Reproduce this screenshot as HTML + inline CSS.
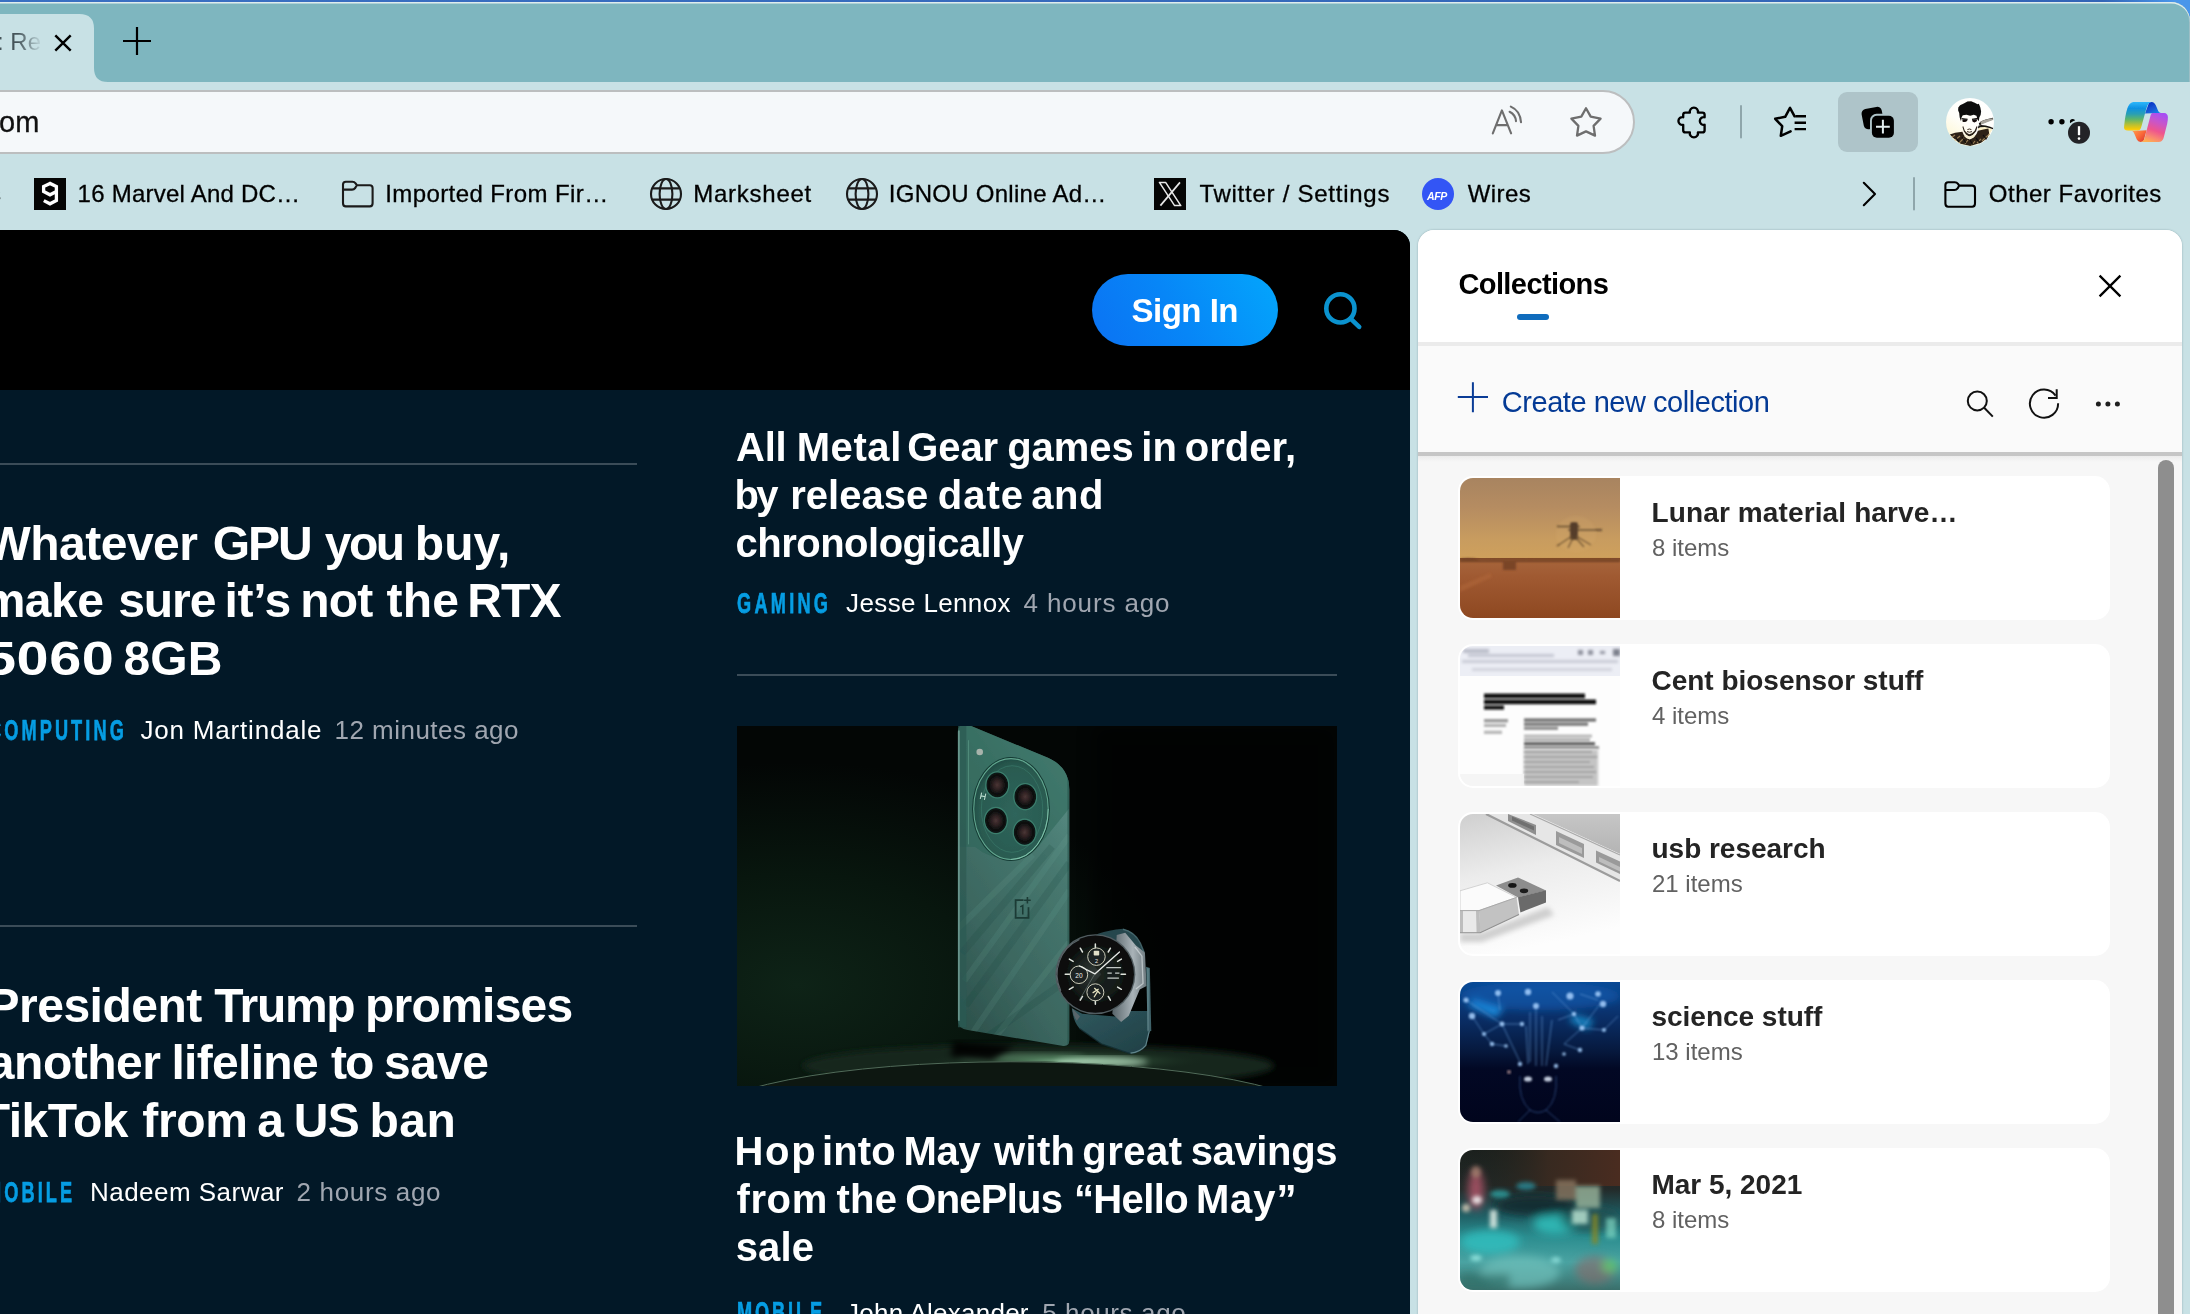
<!DOCTYPE html>
<html lang="en"><head><meta charset="utf-8"><title>Collections</title>
<style>
html,body{margin:0;padding:0}
body{background:#c8e1e5;width:2190px;height:1314px;overflow:hidden}
#root{position:relative;width:2190px;height:1314px;overflow:hidden;font-family:"Liberation Sans",sans-serif;background:#c8e1e5}
#root div,#root svg{position:absolute}
.t{position:absolute;white-space:pre}
#desk{left:0;top:0;width:2190px;height:60px;background:linear-gradient(90deg,#3a70c2 0%,#3365b6 96%,#4a96ea 99.3%)}
#win{left:-40px;top:2px;width:2230px;height:1400px;border-radius:0 19px 0 0;background:#7eb6bf;box-shadow:inset 0 1.5px 0 #dfeced, inset -1px 0 0 #9dbfc6}
#tool{left:-40px;top:82px;width:2230px;height:1300px;background:#c8e1e5}
#addr{left:-60px;top:90px;width:1691px;height:60px;border:2px solid #bcbebf;border-radius:33px;background:#f5f8fa}
#colbtn{left:1838px;top:92px;width:80px;height:60px;border-radius:9px;background:#aec4c9}
#afp{left:1422px;top:178px;width:32px;height:32px;border-radius:50%;background:#3355f5}
#page{left:-40px;top:230px;width:1450px;height:1100px;border-radius:0 16px 0 0;background:#021827;overflow:hidden}
#sitehdr{left:0;top:0;width:1450px;height:160px;background:#000}
#signin{left:1132px;top:44px;width:186px;height:72px;border-radius:36px;background:linear-gradient(60deg,#0b72f3 0%,#0786f7 45%,#03a6fc 100%)}
.sep{height:2px;background:#3b4c58}
#panel{left:1418px;top:230px;width:764px;height:1100px;border-radius:16px 16px 0 0;background:#f7f7f7;overflow:hidden;box-shadow:0 0 2px rgba(60,90,100,.45)}
#phead{left:0;top:0;width:764px;height:112px;background:#fff}
#psep1{left:0;top:112px;width:764px;height:4px;background:#ebebeb}
#pbar{left:0;top:116px;width:764px;height:106px;background:#fafafa}
#psep2{left:0;top:222px;width:764px;height:10px;background:linear-gradient(180deg,#c6c6c6 0,#c6c6c6 40%,#ececec 41%,#f7f7f7 100%)}
#uline{left:99px;top:84px;width:32px;height:6px;border-radius:3px;background:#0f6cbd}
#scroll{left:740px;top:229.8px;width:16.2px;height:900px;border-radius:8.1px 8.1px 0 0;background:#8e8e8e}
.card{left:40px;width:652px;height:144px;border-radius:15px;background:#fff}
.card svg{left:2px;top:2px;width:160px;height:140px;border-radius:13px 0 0 13px}
#texts{position:absolute;left:0;top:0;width:2190px;height:1314px;will-change:transform}

</style></head>
<body>
<div id="root">
<div id="desk"></div>
<div id="win"></div>
<div id="tool"></div>
<svg style="left:0;top:0" width="200" height="90" viewBox="0 0 200 90"><path d="M-5,82 L-5,14 L79.5,14 Q94,14 94,28.5 L94,68 Q94,82 108,82 Z" fill="#c8e1e5"/>
<path d="M55.3,35.3 L70.7,50.7 M70.7,35.3 L55.3,50.7" stroke="#000" stroke-width="2.4" fill="none"/>
<path d="M123,41 H151 M137,27 V55" stroke="#000" stroke-width="2.2" fill="none"/></svg>
<div id="addr"></div>
<!-- toolbar icons -->
<svg style="left:1480px;top:96px" width="140" height="52" viewBox="1480 96 140 52" fill="none" stroke="#6e6e6e" stroke-width="2.1" stroke-linecap="round" stroke-linejoin="round">
<path d="M1492.8,133.4 L1501.9,110.4 L1511.1,133.4 M1496.4,125.1 H1507.4"/>
<path d="M1509.6,111.8 Q1515.4,114.6 1516,121.2"/>
<path d="M1510.8,106.6 Q1520.2,110.6 1521,122.2"/>
<path d="M1586,108.2 L1590.7,116.6 L1600.6,118.6 L1593.6,125.9 L1595,135.6 L1586,131.4 L1577,135.6 L1578.4,125.9 L1571.4,118.6 L1581.3,116.6 Z" stroke-width="2.3"/>
</svg>
<svg style="left:1670px;top:96px" width="150" height="52" viewBox="1670 96 150 52" fill="none" stroke="#000" stroke-width="2.5" stroke-linecap="round" stroke-linejoin="round">
<!-- puzzle -->
<path stroke-width="2.35" d="M1685.4,112.6 H1689.9 A4.1,4.1 0 1 1 1697.9,112.6 H1702.4 Q1704.6,112.6 1704.6,114.8 V117.2 A3.9,3.9 0 1 0 1704.6,124.8 V130.2 Q1704.6,132.4 1702.4,132.4 H1697.9 A4.1,4.1 0 1 1 1689.9,132.4 H1685.4 Q1683.2,132.4 1683.2,130.2 V124.8 A3.9,3.9 0 1 1 1683.2,117.2 V114.8 Q1683.2,112.6 1685.4,112.6 Z"/>
<path d="M1741,106 V137.5" stroke="#8fa6ab" stroke-width="2"/>
<!-- favorites -->
<path d="M1794.6,116.3 L1790,107.8 L1785.2,116.8 L1775.2,118.8 L1782.2,126.2 L1780.8,135.8 L1790.6,131.4"/>
<path d="M1795.4,116.3 H1806 M1794.6,122.7 H1806 M1794.6,129.1 H1806" stroke-width="2.4" stroke-linecap="butt"/>
</svg>
<div id="colbtn"></div>
<svg style="left:1855px;top:100px" width="46" height="44" viewBox="1855 100 46 44">
<rect x="1862.5" y="107.8" width="20.5" height="20.5" rx="4.6" transform="rotate(-11 1872.7 118)" fill="#000"/>
<rect x="1870" y="113.8" width="25.8" height="25.8" rx="6.6" fill="#aec4c9"/>
<rect x="1871.9" y="115.7" width="22" height="22" rx="5" fill="#000"/>
<path d="M1876,126.7 H1889.8 M1882.9,119.8 V133.6" stroke="#e3eef0" stroke-width="2"/>
</svg>
<!-- avatar -->
<svg style="left:1946px;top:98px" width="48" height="48" viewBox="0 0 48 48">
<defs><clipPath id="avc"><circle cx="24" cy="24" r="24"/></clipPath>
<linearGradient id="avg" x1=".8" y1="0" x2=".2" y2="1"><stop offset="0" stop-color="#ffffff"/><stop offset=".55" stop-color="#fffefa"/><stop offset="1" stop-color="#fdf6cf"/></linearGradient>
<filter id="avb"><feGaussianBlur stdDeviation=".45"/></filter></defs>
<g clip-path="url(#avc)"><rect width="48" height="48" fill="url(#avg)"/>
<g filter="url(#avb)">
<path d="M31.9,30.5 L35.1,29.2 L39.7,28.9 L44.2,30.1 L46.5,31.2 L44.2,35.1 L42.4,39.2 L41.5,34.2 L37.9,31.9 L32.8,32.8 Z" fill="#fbf0c8"/>
<path d="M32.8,25.5 L35.1,23.2 L39.7,21.4 L47.0,19.8 L47.2,21.4 L42.0,23.2 L36.5,25.5 L33.7,27.4 Z" fill="#15120f"/>
<path d="M34.2,23.2 L39.7,21.0 L47.0,19.6 L47.0,21.4 L41.1,23.7 L35.1,26.0 Z" fill="#a8a49c" transform="translate(0.6 0.9) scale(0.985)"/>
<path d="M32.4,27.8 L35.1,26.9 L39.7,27.4 L44.2,28.7 L47.2,30.1 L47.0,31.2 L43.3,30.1 L38.8,28.9 L34.2,29.2 L31.9,30.5 Z" fill="#15120f"/>
<path d="M3.8,36.5 L9.1,34.7 L16.4,33.7 L17.8,36.9 L20.5,40.1 L23.7,41.5 L27.4,39.7 L30.5,36.0 L31.9,32.8 L37.4,31.5 L42.4,30.5 L43.1,35.1 L41.5,40.1 L35.1,44.7 L24.2,48.1 L14.6,45.8 L7.3,40.1 Z" fill="#2f2418"/>
<path d="M5,40 L9,37 M8,43 L14,38 M13,45 L18,40 M19,46 L22,42 M26,47 L29,43 M31,45 L35,41 M36,43 L40,39 M40,39 L44,36" stroke="#b89a6a" stroke-width="1.1" opacity=".75"/>
<path d="M10,40 L13,44 M16,39 L20,45 M24,42 L27,47 M30,40 L34,45 M37,37 L41,42" stroke="#0a0806" stroke-width="1.3" opacity=".8"/>
<path d="M12.3,9.5 L14.1,7.3 L17.8,5.4 L21.4,3.4 L25.1,3.2 L28.7,4.7 L31.5,6.3 L32.8,5.7 L34.2,9.1 L35.1,13.2 L34.7,16.8 L33.3,19.6 L32.8,23.2 L31.5,21.4 L30.5,17.8 L27.8,16.8 L24.2,17.8 L20.5,16.8 L16.8,17.3 L15.5,19.6 L15.0,23.2 L13.7,19.6 L13.2,15.0 L12.1,12.3 Z" fill="#0c0b0a"/>
<path d="M16.3,21.5 Q19.2,20.6 21.6,22.6 Q19.4,24.8 16.6,23.8 Z M26,22.6 Q28.6,20.6 31.4,21.6 Q31,24 28.4,24.6 Q26.4,24.2 26,22.6 Z" fill="#14110f"/>
<path d="M15.6,20.6 L21.6,21.4 M26,21.4 L32,20.4" stroke="#14110f" stroke-width="1.3"/>
<path d="M16.4,28.7 L17.8,33.3 L20.0,36.5 L23.2,38.5 L26.9,36.9 L30.1,33.3 L31.5,28.7 L30.5,28.3 L28.7,32.8 L26.0,35.3 L23.2,36.3 L21.0,35.1 L18.7,32.4 L17.3,28.3 Z" fill="#2a2017"/>
<path d="M21.4,31.6 Q23.4,30.4 25.4,31.6 M21,33.6 Q23.4,34.8 26,33.6" stroke="#3a2c20" stroke-width="1" fill="none"/>
<path d="M19,37.5 Q23.4,42 28.6,37" stroke="#f8efd0" stroke-width="2.2" fill="none"/>
</g></g></svg>
<!-- more + badge -->
<svg style="left:2040px;top:110px" width="60" height="40" viewBox="2040 110 60 40">
<circle cx="2051.1" cy="121.8" r="2.7"/><circle cx="2061.9" cy="121.8" r="2.7"/><circle cx="2072.6" cy="121.8" r="2.7"/>
<circle cx="2079" cy="132.8" r="13" fill="#c8e1e5"/>
<circle cx="2079" cy="132.8" r="11" fill="#232327"/>
<path d="M2079,126.2 V135.2" stroke="#fff" stroke-width="2.3"/><circle cx="2079" cy="138.6" r="1.3" fill="#fff"/>
</svg>
<!-- copilot -->
<svg style="left:2122px;top:100px" width="48" height="44" viewBox="0 0 48 44">
<defs>
<linearGradient id="cpA" x1="0" y1="0" x2="0" y2="1"><stop offset="0" stop-color="#2cb8fb"/><stop offset=".22" stop-color="#0e92e2"/><stop offset=".42" stop-color="#2a9fb4"/><stop offset=".6" stop-color="#5cb56c"/><stop offset=".8" stop-color="#bcc030"/><stop offset=".96" stop-color="#facc07"/></linearGradient>
<linearGradient id="cpB" x1=".65" y1="0" x2=".3" y2="1"><stop offset="0" stop-color="#a850f2"/><stop offset=".3" stop-color="#c955c8"/><stop offset=".58" stop-color="#ee558e"/><stop offset=".82" stop-color="#f98870"/><stop offset="1" stop-color="#ffae52"/></linearGradient>
<linearGradient id="cpC" x1=".2" y1="0" x2=".8" y2="1"><stop offset="0" stop-color="#0a2cc2"/><stop offset=".6" stop-color="#1659d6"/><stop offset="1" stop-color="#0f86ea"/></linearGradient>
<linearGradient id="cpD" x1="0" y1="0" x2="1" y2=".8"><stop offset="0" stop-color="#ffa04e"/><stop offset=".55" stop-color="#fb6a38"/><stop offset="1" stop-color="#de3a30"/></linearGradient>
<filter id="cpf"><feGaussianBlur stdDeviation=".25"/></filter>
</defs>
<g filter="url(#cpf)">
<path d="M27.1,2.4 Q28.4,1.9 30,2 Q31.6,2.2 32.6,3.4 Q33.7,4.8 34.5,6.9 L36.2,11 Q36.9,12.6 38.8,13 L23,13.6 Z" fill="url(#cpC)"/>
<path d="M11.1,2 L30,2 Q28.2,2.2 27.1,2.9 Q25.4,4.2 23.8,10.6 L19.7,25.4 Q18.6,30.6 15.5,30.6 L6,30.6 Q1.2,30.6 2.2,25.4 Q3.2,15.2 5.3,8.6 Q7.2,2.6 11.1,2 Z" fill="url(#cpA)"/>
<path d="M11.1,31 L24.6,30.3 L21.8,40.2 Q20.8,42.2 18.5,41.9 Q16,41.6 14.8,39.4 L12.7,34.5 Q12,32.2 9.8,30.6 Z" fill="url(#cpD)"/>
<path d="M30,13.1 L42.3,13.1 Q45.6,13.4 45.9,17 Q46,20 45.2,23.8 L41.5,38.2 Q40.4,41.9 36.6,41.9 L18.6,41.9 Q21,41.6 22.2,39.4 Q23.2,37 24.2,32 L27.9,18 Q28.6,14.2 30,13.1 Z" fill="url(#cpB)"/>
</g>
</svg>
<!-- bookmarks bar icons -->
<svg style="left:30px;top:174px" width="1460" height="40" viewBox="30 174 1460 40" fill="none" stroke="#1b1b1b" stroke-width="2.1" stroke-linejoin="round">
<rect x="34" y="178" width="32" height="32" fill="#050505" stroke="none"/>
<path d="M50,183.4 L43.6,186.6 V191.6 L50,194.8 L56.4,191.6 V186.6 Z M56.4,191 V200.4 L50,203.8 L43.8,200.6" stroke="#fff" stroke-width="3.3" stroke-linejoin="miter"/>
<!-- folder -->
<path d="M343,203.2 V184.6 Q343,181.8 345.8,181.8 H352.4 Q354.4,181.8 355.6,183.4 L356.8,185.2 H369.8 Q372.6,185.2 372.6,188 V203.2 Q372.6,206.4 369.8,206.4 H345.8 Q343,206.4 343,203.2 Z M343,189.6 H352 Q354,189.6 355.2,188 L356.8,185.2"/>
<!-- globes -->
<g id="glb"><circle cx="666" cy="194" r="15"/><ellipse cx="666" cy="194" rx="6.4" ry="15"/><path d="M652.4,188.4 H679.6 M652.4,199.6 H679.6"/></g>
<g transform="translate(196 0)"><circle cx="666" cy="194" r="15"/><ellipse cx="666" cy="194" rx="6.4" ry="15"/><path d="M652.4,188.4 H679.6 M652.4,199.6 H679.6"/></g>
<!-- X -->
<rect x="1154" y="178" width="32" height="32" fill="#050505" stroke="none"/>
<path d="M1159.4,182.4 L1165.6,182.4 L1180.8,205.6 L1174.6,205.6 Z" stroke="#e8e8e8" stroke-width="1.5"/>
<path d="M1180,182.4 L1160.4,205.6" stroke="#e8e8e8" stroke-width="1.7"/>
</svg>
<div id="afp"></div>
<svg style="left:1850px;top:170px" width="140" height="46" viewBox="1850 170 140 46" fill="none" stroke="#000" stroke-width="2.1" stroke-linejoin="round" stroke-linecap="round">
<path d="M1863.8,182.8 L1875,194 L1863.8,205.2"/>
<path d="M1914,178 V209.6" stroke="#8fa6ab" stroke-width="2"/>
<path d="M1945.4,203.6 V185 Q1945.4,182.2 1948.2,182.2 H1954.8 Q1956.8,182.2 1958,183.8 L1959.2,185.6 H1972.2 Q1975,185.6 1975,188.4 V203.6 Q1975,206.8 1972.2,206.8 H1948.2 Q1945.4,206.8 1945.4,203.6 Z M1945.4,190 H1954.4 Q1956.4,190 1957.6,188.4 L1959.2,185.6"/>
</svg>

<div id="page">
<div id="sitehdr"></div>
<div id="signin"></div>
<svg style="left:1355px;top:55px" width="52" height="52" viewBox="1315 285 52 52" fill="none" stroke="#0b93cf" stroke-width="4.6" stroke-linecap="round"><circle cx="1340.4" cy="308.4" r="14.1"/><path d="M1350.6,318.6 L1359.2,326.8"/></svg>
<div class="sep" style="left:0;top:233px;width:677px"></div>
<div class="sep" style="left:0;top:695px;width:677px"></div>
<div class="sep" style="left:777px;top:444px;width:600px"></div>
<svg style="left:777px;top:496px" width="600" height="360" viewBox="0 0 2190 1314">
<defs>
<radialGradient id="pbg" cx=".1" cy=".72" r=".62"><stop offset="0" stop-color="#0e2317"/><stop offset=".5" stop-color="#08160e"/><stop offset="1" stop-color="#030605"/></radialGradient>
<linearGradient id="pbody" x1=".7" y1="0" x2=".2" y2="1"><stop offset="0" stop-color="#5b8f86"/><stop offset=".3" stop-color="#47786f"/><stop offset=".7" stop-color="#3b665f"/><stop offset="1" stop-color="#2d524c"/></linearGradient>
<radialGradient id="pcam" cx=".55" cy=".55" r=".6"><stop offset="0" stop-color="#2f655b"/><stop offset=".8" stop-color="#295a50"/><stop offset="1" stop-color="#1d463f"/></radialGradient>
<radialGradient id="plens" cx=".5" cy=".5" r=".5"><stop offset="0" stop-color="#4b3535"/><stop offset=".4" stop-color="#2a1f20"/><stop offset=".72" stop-color="#0b0e0e"/><stop offset=".9" stop-color="#0e1514"/><stop offset="1" stop-color="#2d6a5c"/></radialGradient>
<radialGradient id="pglow" cx=".5" cy=".5" r=".5"><stop offset="0" stop-color="#7fb08c" stop-opacity=".95"/><stop offset=".3" stop-color="#44704f" stop-opacity=".8"/><stop offset="1" stop-color="#14241a" stop-opacity="0"/></radialGradient>
<radialGradient id="wface" cx=".5" cy=".5" r=".5"><stop offset="0" stop-color="#333b38"/><stop offset=".75" stop-color="#141a18"/><stop offset="1" stop-color="#070909"/></radialGradient>
<linearGradient id="wstrap" x1="0" y1="0" x2="1" y2="1"><stop offset="0" stop-color="#31595f"/><stop offset="1" stop-color="#1f3f45"/></linearGradient>
<linearGradient id="wcase" x1="0" y1="0" x2="1" y2="0"><stop offset="0" stop-color="#59656a"/><stop offset=".6" stop-color="#a9b3b8"/><stop offset="1" stop-color="#6c787d"/></linearGradient>
<filter id="pb1"><feGaussianBlur stdDeviation="2.6"/></filter>
<filter id="pb3"><feGaussianBlur stdDeviation="12"/></filter>
<filter id="pb8"><feGaussianBlur stdDeviation="30"/></filter>
<clipPath id="pclip"><rect width="2190" height="1314"/></clipPath>
<clipPath id="phclip"><path d="M835,-8 L1135,116 Q1213,150 1213,232 L1213,1146 Q1213,1172 1186,1167 L842,1110 Q806,1104 806,1070 L806,22 Q806,-4 835,-8 Z"/></clipPath>
</defs>
<g clip-path="url(#pclip)">
<rect width="2190" height="1314" fill="url(#pbg)"/>
<rect x="1300" width="890" height="1314" fill="#020403" opacity=".5" filter="url(#pb8)"/>
<!-- pedestal -->
<ellipse cx="1100" cy="1240" rx="860" ry="78" fill="#16281d" filter="url(#pb3)"/>
<ellipse cx="1200" cy="1222" rx="520" ry="44" fill="url(#pglow)"/>
<ellipse cx="1330" cy="1226" rx="170" ry="18" fill="#b9dfc3" opacity=".75" filter="url(#pb3)"/>
<ellipse cx="1040" cy="1208" rx="230" ry="16" fill="#6f9f7e" opacity=".4" filter="url(#pb3)"/>
<path d="M790,1150 L1010,1168 L930,1222 L780,1205 Z" fill="#020604" opacity=".9" filter="url(#pb3)"/>
<ellipse cx="1000" cy="1449" rx="1150" ry="225" fill="#0d1711"/>
<ellipse cx="1000" cy="1450.5" rx="1150" ry="225" fill="none" stroke="#86ad92" stroke-width="3.4" opacity=".6" filter="url(#pb1)"/>
<g filter="url(#pb1)">
<!-- phone -->
<path d="M835,-8 L1135,116 Q1213,150 1213,232 L1213,1146 Q1213,1172 1186,1167 L842,1110 Q806,1104 806,1070 L806,22 Q806,-4 835,-8 Z" fill="url(#pbody)"/>
<g clip-path="url(#phclip)">
<path d="M806,440 L870,442 Q960,520 1100,440 L1213,300 V-10 H806 Z" fill="#2c6658" opacity=".55"/>
<path d="M860,1120 L1213,600 M830,930 L1213,400 M940,1140 L1213,790 M806,740 L1080,470" stroke="#7fb0a4" stroke-width="22" opacity=".12"/>
<path d="M835,1020 L1213,500 M905,1140 L1213,920 M820,830 L1150,440" stroke="#173f38" stroke-width="26" opacity=".16"/>
<path d="M1213,150 V1170" stroke="#1f4a42" stroke-width="14" opacity=".5"/>
</g>
<path d="M822,0 V1100" stroke="#2c5a53" stroke-width="30" opacity=".75"/><path d="M810,16 V1076" stroke="#86b3a8" stroke-width="5" opacity=".85"/>
<path d="M845,52 V432" stroke="#62a08c" stroke-width="3.5" opacity=".6"/>
<!-- camera -->
<ellipse cx="1000" cy="303" rx="142" ry="190" fill="#143a33"/>
<ellipse cx="1000" cy="303" rx="136" ry="184" fill="url(#pcam)" stroke="#62a68f" stroke-width="4"/>
<path d="M1000,487 A136,184 0 0 0 1136,303" fill="none" stroke="#8fd0b8" stroke-width="3.4" opacity=".7"/>
<ellipse cx="1004" cy="303" rx="112" ry="158" fill="none" stroke="#3f8573" stroke-width="3" opacity=".6"/>
<g stroke="#3c7f6e" stroke-width="4">
<ellipse cx="950" cy="215" rx="42" ry="48" fill="url(#plens)"/>
<ellipse cx="1052" cy="258" rx="42" ry="48" fill="url(#plens)"/>
<ellipse cx="945" cy="345" rx="42" ry="48" fill="url(#plens)"/>
<ellipse cx="1050" cy="388" rx="42" ry="48" fill="url(#plens)"/>
</g>
<circle cx="886" cy="95" r="12" fill="#a7b3ab"/>
<path d="M893,243 L888,266 M908,247 L903,270 M891,255 L906,258" stroke="#b9dccf" stroke-width="4"/>
<!-- logo -->
<path d="M1046,636 H1017 V700 H1064 V662" fill="none" stroke="#1a3a34" stroke-width="6.4"/>
<path d="M1034,660 L1043,655 V688 M1060,624 V648 M1048,636 H1072" fill="none" stroke="#1a3a34" stroke-width="5.6"/>
<!-- watch strap top -->
<path d="M1273,790 Q1300,750 1409,740 Q1450,748 1470,790 L1487,828 L1448,838 L1417,790 Z" fill="#27474d"/>
<path d="M1409,742 Q1452,752 1472,792 L1486,826" stroke="#4f7379" stroke-width="5" fill="none" opacity=".8"/>
<!-- lower strap -->
<path d="M1222,1030 Q1228,1080 1250,1104 L1330,1160 L1436,1196 Q1470,1196 1494,1168 L1511,1098 L1506,1040 L1428,1040 L1380,1060 L1260,1050 Z" fill="url(#wstrap)"/>
<path d="M1436,1194 Q1470,1192 1492,1166 L1508,1100" stroke="#7ea2a8" stroke-width="4" fill="none" opacity=".7"/>
<path d="M1250,1104 L1330,1160 L1436,1196" stroke="#142e33" stroke-width="5" fill="none" opacity=".8"/>
<!-- case -->
<path d="M1386,763 L1417,755 L1456,801 L1489,827 L1495,949 L1470,962 L1430,1058 L1402,1080 L1370,1050 Z" fill="url(#wcase)"/>
<path d="M1452,806 L1478,840 L1482,940 L1456,960" fill="none" stroke="#dfe6e8" stroke-width="5" opacity=".6"/>
<path d="M1493,879 L1507,883 L1512,1113 L1499,1116 Z" fill="#40646a"/>
<path d="M1500,884 V1112" stroke="#86aab0" stroke-width="2.6" opacity=".8"/>
<path d="M1224,1030 Q1226,1058 1240,1076 L1252,1060 Z" fill="#59666a"/>
<circle cx="1308" cy="906" r="146" fill="#515c60"/>
<circle cx="1308" cy="906" r="141" fill="#0a0c0d"/>
<path d="M1182,966 A140,140 0 0 1 1250,779" fill="none" stroke="#79868a" stroke-width="4" opacity=".7"/>
<circle cx="1308" cy="906" r="118" fill="url(#wface)"/>
<path d="M1308,800 L1398,852 L1398,960 L1308,1012 L1262,985 L1330,906 L1262,826 Z" fill="#161c1a" opacity=".75"/>
<g stroke="#dfe3dc" stroke-width="5.5" stroke-linecap="round">
<path d="M1308,796 V812 M1308,1000 V1016 M1198,906 H1214 M1402,906 H1418"/>
<path d="M1253,811 L1261,824.9 M1363,811 L1355,824.9 M1213,851 L1226.9,859 M1403,851 L1389.1,859 M1213,961 L1226.9,953 M1403,961 L1389.1,953 M1253,1001 L1261,987.1 M1363,1001 L1355,987.1"/>
</g>
<g fill="#1c2220" stroke="#cfcfbd" stroke-width="3.6">
<circle cx="1312" cy="842" r="32"/><circle cx="1248" cy="908" r="32"/><circle cx="1308" cy="972" r="31"/>
</g>
<path d="M1306,905 L1396,825 M1306,905 L1250,876" stroke="#e6e9e6" stroke-width="5" stroke-linecap="round"/>
<path d="M1306,905 L1250,1000" stroke="#7f8c88" stroke-width="2"/>
<rect x="1302" y="820" width="20" height="18" rx="3" fill="#e2dfc8"/>
<path d="M1348,882 H1402 M1352,902 H1368 M1380,902 H1396 M1352,920 H1394" stroke="#c3c9c6" stroke-width="4.4"/>
<path d="M1304,956 L1317,968 L1303,990 M1320,960 L1298,974 M1317,968 L1326,978" stroke="#e9e6c4" stroke-width="4.6" fill="none"/>
</g>
<text x="1248" y="918" font-family="Liberation Sans, sans-serif" font-size="24" fill="#eceeea" text-anchor="middle">20</text>
<text x="1312" y="866" font-family="Liberation Sans, sans-serif" font-size="20" fill="#eceeea" text-anchor="middle">2</text>
</g>
</svg>
</div>

<div id="panel">
<div id="phead"></div>
<div id="psep1"></div>
<div id="pbar"></div>
<div id="psep2"></div>
<div id="uline"></div>
<svg style="left:0;top:0" width="764" height="230" viewBox="0 0 764 230" fill="none" stroke="#000" stroke-width="2.3">
<path d="M681.6,45.6 L702.4,66.4 M702.4,45.6 L681.6,66.4"/>
<path d="M39.8,167 H70 M54.9,152.2 V182.3" stroke="#0a3c96" stroke-width="2"/>
<g stroke="#111" stroke-width="2" stroke-linecap="butt">
<circle cx="559.3" cy="170.9" r="9.5"/><path d="M566.2,177.8 L574.8,186.6"/>
<path d="M640.1,173.2 A14.1,14.1 0 1 1 637.6,165.6"/>
<path d="M638.7,159.3 V168 H630"/>
</g>
<g fill="#1f1f1f" stroke="none"><circle cx="680.4" cy="173.9" r="2.5"/><circle cx="689.9" cy="173.9" r="2.5"/><circle cx="699.4" cy="173.9" r="2.5"/></g>
</svg>
<div id="scroll"></div>
<!-- card 1 : mars -->
<div class="card" style="top:246px"><svg viewBox="0 0 160 140">
<defs><linearGradient id="m1" x1="0" y1="0" x2="0" y2="1"><stop offset="0" stop-color="#a88460"/><stop offset=".35" stop-color="#b58c61"/><stop offset=".75" stop-color="#c89c5f"/><stop offset="1" stop-color="#cfa15c"/></linearGradient>
<linearGradient id="m2" x1="0" y1="0" x2="0" y2="1"><stop offset="0" stop-color="#7f4a2a"/><stop offset=".08" stop-color="#a5633a"/><stop offset=".3" stop-color="#a05a32"/><stop offset="1" stop-color="#8e4821"/></linearGradient>
<filter id="mb"><feGaussianBlur stdDeviation=".9"/></filter></defs>
<rect width="160" height="82" fill="url(#m1)"/>
<rect y="80" width="160" height="60" fill="url(#m2)"/>
<g filter="url(#mb)">
<path d="M0,81 Q10,78.5 20,82 L160,81.5 V84 H0 Z" fill="#6e3d22" opacity=".8"/>
<rect x="43" y="83" width="13" height="9" fill="#7a4526"/>
<path d="M0,108 L30,95 L32,99 L0,114 Z" fill="#b0683a" opacity=".55"/>
<path d="M97,48.6 H120 M108,52 H142" stroke="#4a3422" stroke-width="1.5"/>
<rect x="110" y="44" width="8" height="18" rx="2" fill="#3e2c1e"/>
<path d="M112,58 L97,68 M116,58 L131,67 M113,60 L108,70 M116,60 L124,69" stroke="#5a4028" stroke-width="1.3"/>
<ellipse cx="116" cy="56" rx="20" ry="18" fill="#d9b272" opacity=".14"/>
</g></svg></div>
<!-- card 2 : document -->
<div class="card" style="top:414px"><svg viewBox="0 0 160 140">
<defs><filter id="db"><feGaussianBlur stdDeviation="1"/></filter><filter id="db2"><feGaussianBlur stdDeviation="1.6"/></filter></defs>
<rect width="160" height="140" fill="#fdfdfd"/>
<rect width="160" height="30" fill="#eceef5"/>
<g filter="url(#db2)" fill="#b9bcc8">
<rect x="3" y="3" width="26" height="4"/><rect x="8" y="8" width="86" height="3" opacity=".8"/><rect x="2" y="14" width="156" height="3" opacity=".7"/><rect x="12" y="22" width="140" height="3" opacity=".55"/>
<rect x="118" y="4" width="5" height="5" fill="#8d909c"/><rect x="128" y="4" width="5" height="5" fill="#8d909c"/><rect x="140" y="5" width="5" height="3" fill="#8d909c"/><rect x="153" y="3" width="7" height="7" fill="#7d808c"/>
</g>
<g filter="url(#db)">
<rect x="24" y="47.6" width="101" height="4.6" fill="#111"/><rect x="24" y="53.6" width="112" height="4.6" fill="#111"/><rect x="24" y="59.6" width="20" height="4" fill="#111"/>
<rect x="24" y="73" width="24" height="3.4" fill="#9a9a9a"/><rect x="24" y="78" width="22" height="3" fill="#b0b0b0"/><rect x="24" y="84.6" width="18" height="3.4" fill="#b8b8b8"/>
<rect x="64" y="72.4" width="72" height="3.2" fill="#6e6e6e"/><rect x="64" y="76.6" width="64" height="3.2" fill="#777"/><rect x="64" y="80.8" width="34" height="3" fill="#888"/>
<rect x="64" y="88.6" width="68" height="2.8" fill="#b6b6b6"/><rect x="64" y="92.4" width="66" height="2.8" fill="#aaa"/>
<rect x="64" y="96.2" width="71" height="3" fill="#555"/><rect x="64" y="100.2" width="75" height="2.8" fill="#8a8a8a"/>
</g>
<rect x="64" y="103.5" width="74" height="36.5" fill="#c4c4c4" filter="url(#db2)"/>
<g filter="url(#db)" fill="#a4a4a4"><rect x="64" y="105" width="68" height="2"/><rect x="64" y="110" width="73" height="2"/><rect x="64" y="115" width="66" height="2"/><rect x="64" y="120" width="70" height="2"/><rect x="64" y="125" width="72" height="2"/><rect x="64" y="130" width="69" height="2"/><rect x="64" y="135" width="55" height="2"/></g>
<rect x="0" y="128" width="64" height="12" fill="#f2f3f3" opacity=".8"/>
</svg></div>
<!-- card 3 : usb -->
<div class="card" style="top:582px"><svg viewBox="0 0 160 140">
<defs><linearGradient id="u0" x1="0" y1="0" x2=".25" y2="1"><stop offset="0" stop-color="#cfcfcf"/><stop offset=".45" stop-color="#ececec"/><stop offset="1" stop-color="#fdfdfd"/></linearGradient>
<linearGradient id="u1" x1="0" y1="0" x2="0" y2="1"><stop offset="0" stop-color="#c6c6c6"/><stop offset="1" stop-color="#b4b4b4"/></linearGradient>
<filter id="ub"><feGaussianBlur stdDeviation=".6"/></filter><filter id="ub3"><feGaussianBlur stdDeviation="2.5"/></filter></defs>
<rect width="160" height="140" fill="url(#u0)"/>
<g filter="url(#ub)">
<path d="M73,0 H160 V40 Z" fill="url(#u1)"/>
<path d="M26,0 H73 L160,40 V67 Z" fill="#e6e6e6"/>
<path d="M26,0 L160,67" stroke="#9c9c9c" stroke-width="2.2"/>
<path d="M70,0 L160,41" stroke="#a9a9a9" stroke-width="1.2"/>
<path d="M48,0 L76,11 V21 L48,7 Z" fill="#8f8f8f"/><path d="M52,2.4 L74,12.6 V16.6 L52,6.4 Z" fill="#6f6f6f"/>
<path d="M96,17 L124,30 V44 L96,31 Z" fill="#9a9a9a"/><path d="M99,23 L122,34 V40 L99,29 Z" fill="#bdbdbd"/>
<path d="M136,36.4 L160,47.6 V60 L136,48.6 Z" fill="#9a9a9a"/><path d="M139,43 L160,53 V57.6 L139,47.6 Z" fill="#bdbdbd"/>
</g>
<path d="M0,119 H20 L88,93 L94,101 L22,128 H0 Z" fill="#cfcfcf" filter="url(#ub3)"/>
<g filter="url(#ub)">
<path d="M36,71.6 L58,63.4 L86,76.4 L58,83.4 Z" fill="#8d8d8d"/>
<path d="M58,83.2 L86,76.2 V88.6 L60.4,98.4 Z" fill="#6b6b6b"/>
<ellipse cx="52.4" cy="71.4" rx="4.2" ry="2.3" fill="#141414"/><ellipse cx="64" cy="76.8" rx="4.2" ry="2.4" fill="#1d1d1d"/>
<path d="M0,76.8 L27.4,68.8 L56.6,83.4 L19,96.6 H0 Z" fill="#fbfbfb" stroke="#c9c9c9" stroke-width=".8"/>
<path d="M19,96.6 L56.6,83.4 L59,100.6 L20.2,118.8 Z" fill="#c2c2c2"/>
<path d="M0,96.6 H19 L20.2,118.8 H0 Z" fill="#e9e9e9"/><path d="M0,97 H3 V118.6 H0 Z M16,97 H19.4 L20.4,118.6 H16.6 Z" fill="#bdbdbd"/>
<path d="M0,96.6 H19 L56.6,83.4" stroke="#a8a8a8" stroke-width="1" fill="none"/>
<path d="M0,118.8 H20.2 L59,100.6" stroke="#8f8f8f" stroke-width="1.1" fill="none"/>
</g></svg></div>
<!-- card 4 : science -->
<div class="card" style="top:750px"><svg viewBox="0 0 160 140">
<defs><linearGradient id="s0" x1="0" y1="0" x2="0" y2="1"><stop offset="0" stop-color="#0a4a96"/><stop offset=".25" stop-color="#0a2f68"/><stop offset=".5" stop-color="#06183c"/><stop offset=".62" stop-color="#020824"/><stop offset="1" stop-color="#01051d"/></linearGradient>
<filter id="sb"><feGaussianBlur stdDeviation="1.1"/></filter><filter id="sb3"><feGaussianBlur stdDeviation="3.5"/></filter></defs>
<rect width="160" height="140" fill="url(#s0)"/>
<g filter="url(#sb3)"><path d="M14,16 L44,26 L36,36 L8,24 Z" fill="#1f9bf0" opacity=".8"/><path d="M112,32 L134,38 L128,48 L110,40 Z" fill="#19a5e6" opacity=".7"/><ellipse cx="80" cy="14" rx="80" ry="14" fill="#1560b8" opacity=".5"/></g>
<g filter="url(#sb)" stroke="#6ea6e2" stroke-width="1" fill="none" opacity=".6">
<path d="M6,18 L42,42 L62,42 M12,34 L24,52 L42,42 M42,42 L60,80 M76,24 V84 M82,34 V84 M70,30 V80 M92,38 L86,84 M66,44 L68,82 M92,10 L114,32 L122,46 L104,62 M114,32 L98,38 M140,22 L122,46 L144,48 M104,62 L120,68 M24,52 L32,62 L46,64 M144,48 L158,34 M38,12 L40,28 M120,12 L138,18"/>
</g>
<g filter="url(#sb)" fill="#a9d2ff" opacity=".85">
<circle cx="38" cy="11" r="3"/><circle cx="68" cy="10" r="3.2"/><circle cx="110" cy="14" r="3.6"/><circle cx="138" cy="12" r="2.8"/><circle cx="143" cy="22" r="3.2"/><circle cx="76" cy="24" r="3"/><circle cx="6" cy="18" r="2.6"/><circle cx="12" cy="34" r="3.2"/><circle cx="42" cy="42" r="2.4"/><circle cx="62" cy="42" r="2.2"/><circle cx="114" cy="32" r="2.2"/><circle cx="122" cy="46" r="2.6"/><circle cx="24" cy="52" r="2"/><circle cx="144" cy="48" r="2"/><circle cx="32" cy="62" r="2.2"/><circle cx="46" cy="64" r="1.8"/><circle cx="120" cy="68" r="2.2"/><circle cx="104" cy="72" r="1.8"/><circle cx="60" cy="82" r="2.2"/><circle cx="96" cy="84" r="2.2"/>
<ellipse cx="68" cy="97" rx="4" ry="2.6" fill="#e6f0ff"/><ellipse cx="88" cy="97" rx="4" ry="2.6" fill="#e6f0ff"/>
</g>
<path d="M60,94 Q58,118 70,128 Q78,133 86,128 Q98,118 96,94 M70,128 L58,140 M86,128 L100,140" stroke="#3c5f9a" stroke-width="1" fill="none" opacity=".7" filter="url(#sb)"/>
<circle cx="49" cy="90" r="2" fill="#c9a2a0" opacity=".7" filter="url(#sb)"/>
</svg></div>
<!-- card 5 : lab -->
<div class="card" style="top:918px"><svg viewBox="0 0 160 140">
<defs><linearGradient id="l0" x1="0" y1="0" x2="0" y2="1"><stop offset="0" stop-color="#1b201d"/><stop offset=".28" stop-color="#232a29"/><stop offset=".45" stop-color="#1f5a60"/><stop offset=".62" stop-color="#2b8d8f"/><stop offset=".8" stop-color="#4aa3a2"/><stop offset="1" stop-color="#3a6f6b"/></linearGradient>
<linearGradient id="l1" x1="0" y1="0" x2="1" y2="0"><stop offset="0" stop-color="#16201c" stop-opacity="0"/><stop offset=".55" stop-color="#3a2a20" stop-opacity=".9"/><stop offset="1" stop-color="#4a2c20"/></linearGradient>
<filter id="lb"><feGaussianBlur stdDeviation="2.2"/></filter><filter id="lb2"><feGaussianBlur stdDeviation="4"/></filter></defs>
<rect width="160" height="140" fill="url(#l0)"/>
<rect width="160" height="36" fill="url(#l1)"/>
<g filter="url(#lb2)">
<ellipse cx="30" cy="92" rx="30" ry="12" fill="#2fc0c0" opacity=".8"/><ellipse cx="95" cy="74" rx="22" ry="10" fill="#2fc4c0" opacity=".8"/><ellipse cx="60" cy="122" rx="40" ry="16" fill="#6fc2bc" opacity=".7"/><ellipse cx="135" cy="120" rx="20" ry="14" fill="#8a6a6a" opacity=".6"/><ellipse cx="150" cy="116" rx="8" ry="6" fill="#5fd06a" opacity=".8"/>
<ellipse cx="16" cy="40" rx="8" ry="20" fill="#b0566a" opacity=".85"/><ellipse cx="75" cy="56" rx="40" ry="10" fill="#10282c" opacity=".8"/><ellipse cx="130" cy="70" rx="30" ry="12" fill="#1c4a4a" opacity=".6"/>
<rect x="0" y="124" width="50" height="16" fill="#2f6f6a" opacity=".7"/>
</g>
<g filter="url(#lb)">
<rect x="96" y="30" width="20" height="20" fill="#8a7660" opacity=".8"/><rect x="116" y="36" width="24" height="22" fill="#9ab59c" opacity=".8"/><rect x="30" y="60" width="7" height="18" fill="#e6f2ea" opacity=".85"/><rect x="112" y="60" width="16" height="14" fill="#bfe8d6" opacity=".8"/><rect x="132" y="64" width="6" height="30" fill="#8a8a28" opacity=".8"/><rect x="146" y="68" width="10" height="20" fill="#7fd8c4" opacity=".7"/>
<ellipse cx="17" cy="50" rx="5" ry="4" fill="#f2f2f2" opacity=".9"/><ellipse cx="6" cy="58" rx="4" ry="4" fill="#e8d8c0" opacity=".8"/><ellipse cx="16" cy="22" rx="5" ry="6" fill="#b08a78" opacity=".7"/>
<ellipse cx="40" cy="44" rx="10" ry="4" fill="#2fb0b0" opacity=".7"/><ellipse cx="66" cy="36" rx="10" ry="4" fill="#2a9aaa" opacity=".7"/><ellipse cx="16" cy="108" rx="6" ry="3" fill="#9ff0ea" opacity=".8"/><ellipse cx="96" cy="110" rx="5" ry="3" fill="#9ff0ea" opacity=".7"/>
</g></svg></div>
</div>

<div id="texts">
<span class="t" style="left:-3.00px;top:30.38px;font-size:24px;line-height:24px;color:#4d5b5f;background:linear-gradient(90deg,#46555a 0,#46555a 48%,rgba(70,85,90,.12) 96%);-webkit-background-clip:text;background-clip:text;color:transparent;">: Re</span>
<span class="t" style="left:-1.00px;top:108.05px;font-size:29px;line-height:29px;color:#111;-webkit-text-stroke:0.3px #111;">om</span>
<span class="t" style="left:-11.00px;top:181.68px;font-size:24px;line-height:24px;color:#000;-webkit-text-stroke:0.3px #000;">s</span>
<span class="t" style="left:77.60px;top:181.68px;font-size:24px;line-height:24px;color:#000;letter-spacing:0.233px;-webkit-text-stroke:0.3px #000;">16 Marvel And DC…</span>
<span class="t" style="left:385.20px;top:181.68px;font-size:24px;line-height:24px;color:#000;letter-spacing:0.410px;-webkit-text-stroke:0.3px #000;">Imported From Fir…</span>
<span class="t" style="left:693.30px;top:181.68px;font-size:24px;line-height:24px;color:#000;letter-spacing:0.744px;-webkit-text-stroke:0.3px #000;">Marksheet</span>
<span class="t" style="left:888.80px;top:181.68px;font-size:24px;line-height:24px;color:#000;letter-spacing:0.272px;-webkit-text-stroke:0.3px #000;">IGNOU Online Ad…</span>
<span class="t" style="left:1199.40px;top:181.68px;font-size:24px;line-height:24px;color:#000;letter-spacing:0.741px;-webkit-text-stroke:0.3px #000;">Twitter / Settings</span>
<span class="t" style="left:1467.70px;top:181.68px;font-size:24px;line-height:24px;color:#000;letter-spacing:0.418px;-webkit-text-stroke:0.3px #000;">Wires</span>
<span class="t" style="left:1988.80px;top:181.68px;font-size:24px;line-height:24px;color:#000;letter-spacing:0.508px;-webkit-text-stroke:0.3px #000;">Other Favorites</span>
<span class="t" style="left:1427.00px;top:190.61px;font-size:10.5px;line-height:10.5px;color:#fff;font-weight:700;letter-spacing:-0.400px;font-style:italic;">AFP</span>
<span class="t" style="left:1458.40px;top:269.65px;font-size:29px;line-height:29px;color:#000;font-weight:700;letter-spacing:-0.581px;">Collections</span>
<span class="t" style="left:1501.80px;top:388.05px;font-size:29px;line-height:29px;color:#043a95;letter-spacing:-0.463px;">Create new collection</span>
<span class="t" style="left:1651.50px;top:498.60px;font-size:28px;line-height:28px;color:#242424;font-weight:700;letter-spacing:0.127px;">Lunar material harve…</span>
<span class="t" style="left:1652.00px;top:536.28px;font-size:24px;line-height:24px;color:#616161;">8 items</span>
<span class="t" style="left:1651.50px;top:666.60px;font-size:28px;line-height:28px;color:#242424;font-weight:700;letter-spacing:-0.020px;">Cent biosensor stuff</span>
<span class="t" style="left:1652.00px;top:704.28px;font-size:24px;line-height:24px;color:#616161;">4 items</span>
<span class="t" style="left:1651.50px;top:834.60px;font-size:28px;line-height:28px;color:#242424;font-weight:700;letter-spacing:-0.020px;">usb research</span>
<span class="t" style="left:1652.00px;top:872.28px;font-size:24px;line-height:24px;color:#616161;">21 items</span>
<span class="t" style="left:1651.50px;top:1002.60px;font-size:28px;line-height:28px;color:#242424;font-weight:700;letter-spacing:-0.020px;">science stuff</span>
<span class="t" style="left:1652.00px;top:1040.28px;font-size:24px;line-height:24px;color:#616161;">13 items</span>
<span class="t" style="left:1651.50px;top:1170.60px;font-size:28px;line-height:28px;color:#242424;font-weight:700;letter-spacing:-0.020px;">Mar 5, 2021</span>
<span class="t" style="left:1652.00px;top:1208.28px;font-size:24px;line-height:24px;color:#616161;">8 items</span>
<span class="t" style="left:1131.50px;top:293.87px;font-size:33px;line-height:33px;color:#fff;font-weight:700;letter-spacing:-0.500px;">Sign In</span>
<span class="t" style="left:-14.60px;top:519.87px;font-size:48px;line-height:48px;color:#fff;font-weight:700;letter-spacing:-0.500px;">Whatever</span>
<span class="t" style="left:212.82px;top:519.87px;font-size:48px;line-height:48px;color:#fff;font-weight:700;letter-spacing:-2.072px;">GPU</span>
<span class="t" style="left:324.87px;top:519.87px;font-size:48px;line-height:48px;color:#fff;font-weight:700;letter-spacing:-2.600px;">you</span>
<span class="t" style="left:414.72px;top:519.87px;font-size:48px;line-height:48px;color:#fff;font-weight:700;letter-spacing:0.132px;">buy,</span>
<span class="t" style="left:-17.35px;top:577.37px;font-size:48px;line-height:48px;color:#fff;font-weight:700;letter-spacing:-0.500px;">make</span>
<span class="t" style="left:118.13px;top:577.37px;font-size:48px;line-height:48px;color:#fff;font-weight:700;letter-spacing:-1.030px;">sure</span>
<span class="t" style="left:224.59px;top:577.37px;font-size:48px;line-height:48px;color:#fff;font-weight:700;letter-spacing:-0.297px;">it’s</span>
<span class="t" style="left:300.17px;top:577.37px;font-size:48px;line-height:48px;color:#fff;font-weight:700;letter-spacing:-0.809px;">not</span>
<span class="t" style="left:386.61px;top:577.37px;font-size:48px;line-height:48px;color:#fff;font-weight:700;letter-spacing:0.180px;">the</span>
<span class="t" style="left:467.27px;top:577.37px;font-size:48px;line-height:48px;color:#fff;font-weight:700;letter-spacing:-0.888px;">RTX</span>
<span class="t" style="left:-15.57px;top:634.87px;font-size:48px;line-height:48px;color:#fff;font-weight:700;letter-spacing:0.444px;transform:scaleX(1.2);transform-origin:0 0;">5060</span>
<span class="t" style="left:123.38px;top:634.87px;font-size:48px;line-height:48px;color:#fff;font-weight:700;letter-spacing:0.200px;">8GB</span>
<span class="t" style="left:-12.53px;top:981.87px;font-size:48px;line-height:48px;color:#fff;font-weight:700;letter-spacing:-0.500px;">President</span>
<span class="t" style="left:214.25px;top:981.87px;font-size:48px;line-height:48px;color:#fff;font-weight:700;letter-spacing:-1.339px;">Trump</span>
<span class="t" style="left:365.04px;top:981.87px;font-size:48px;line-height:48px;color:#fff;font-weight:700;letter-spacing:-0.742px;">promises</span>
<span class="t" style="left:-12.15px;top:1039.37px;font-size:48px;line-height:48px;color:#fff;font-weight:700;letter-spacing:-0.500px;">another</span>
<span class="t" style="left:171.40px;top:1039.37px;font-size:48px;line-height:48px;color:#fff;font-weight:700;letter-spacing:-0.677px;">lifeline</span>
<span class="t" style="left:331.09px;top:1039.37px;font-size:48px;line-height:48px;color:#fff;font-weight:700;letter-spacing:-1.940px;">to</span>
<span class="t" style="left:384.05px;top:1039.37px;font-size:48px;line-height:48px;color:#fff;font-weight:700;letter-spacing:-0.586px;">save</span>
<span class="t" style="left:-19.23px;top:1096.87px;font-size:48px;line-height:48px;color:#fff;font-weight:700;letter-spacing:-0.500px;">TikTok</span>
<span class="t" style="left:142.37px;top:1096.87px;font-size:48px;line-height:48px;color:#fff;font-weight:700;letter-spacing:-0.393px;">from</span>
<span class="t" style="left:257.21px;top:1096.87px;font-size:48px;line-height:48px;color:#fff;font-weight:700;letter-spacing:-0.500px;">a</span>
<span class="t" style="left:293.73px;top:1096.87px;font-size:48px;line-height:48px;color:#fff;font-weight:700;letter-spacing:-0.562px;">US</span>
<span class="t" style="left:369.43px;top:1096.87px;font-size:48px;line-height:48px;color:#fff;font-weight:700;letter-spacing:0.580px;">ban</span>
<span class="t" style="left:736.08px;top:427.14px;font-size:40px;line-height:40px;color:#fff;font-weight:700;letter-spacing:-0.291px;">All</span>
<span class="t" style="left:796.69px;top:427.14px;font-size:40px;line-height:40px;color:#fff;font-weight:700;letter-spacing:0.588px;">Metal</span>
<span class="t" style="left:907.29px;top:427.14px;font-size:40px;line-height:40px;color:#fff;font-weight:700;letter-spacing:-0.102px;">Gear</span>
<span class="t" style="left:1007.24px;top:427.14px;font-size:40px;line-height:40px;color:#fff;font-weight:700;letter-spacing:-0.077px;">games</span>
<span class="t" style="left:1141.14px;top:427.14px;font-size:40px;line-height:40px;color:#fff;font-weight:700;letter-spacing:0.304px;">in</span>
<span class="t" style="left:1184.84px;top:427.14px;font-size:40px;line-height:40px;color:#fff;font-weight:700;letter-spacing:0.021px;">order,</span>
<span class="t" style="left:734.44px;top:474.84px;font-size:40px;line-height:40px;color:#fff;font-weight:700;letter-spacing:-2.600px;">by</span>
<span class="t" style="left:790.22px;top:474.84px;font-size:40px;line-height:40px;color:#fff;font-weight:700;">release</span>
<span class="t" style="left:937.87px;top:474.84px;font-size:40px;line-height:40px;color:#fff;font-weight:700;letter-spacing:0.955px;">date</span>
<span class="t" style="left:1031.21px;top:474.84px;font-size:40px;line-height:40px;color:#fff;font-weight:700;letter-spacing:0.600px;">and</span>
<span class="t" style="left:735.52px;top:522.54px;font-size:40px;line-height:40px;color:#fff;font-weight:700;letter-spacing:-0.502px;">chronologically</span>
<span class="t" style="left:734.40px;top:1130.74px;font-size:40px;line-height:40px;color:#fff;font-weight:700;letter-spacing:1.780px;">Hop</span>
<span class="t" style="left:822.05px;top:1130.74px;font-size:40px;line-height:40px;color:#fff;font-weight:700;letter-spacing:0.136px;">into</span>
<span class="t" style="left:903.43px;top:1130.74px;font-size:40px;line-height:40px;color:#fff;font-weight:700;letter-spacing:-0.230px;">May</span>
<span class="t" style="left:993.99px;top:1130.74px;font-size:40px;line-height:40px;color:#fff;font-weight:700;letter-spacing:0.363px;">with</span>
<span class="t" style="left:1082.27px;top:1130.74px;font-size:40px;line-height:40px;color:#fff;font-weight:700;letter-spacing:0.499px;">great</span>
<span class="t" style="left:1190.65px;top:1130.74px;font-size:40px;line-height:40px;color:#fff;font-weight:700;letter-spacing:-0.349px;">savings</span>
<span class="t" style="left:736.39px;top:1178.64px;font-size:40px;line-height:40px;color:#fff;font-weight:700;letter-spacing:0.681px;">from</span>
<span class="t" style="left:836.53px;top:1178.64px;font-size:40px;line-height:40px;color:#fff;font-weight:700;letter-spacing:0.231px;">the</span>
<span class="t" style="left:905.31px;top:1178.64px;font-size:40px;line-height:40px;color:#fff;font-weight:700;letter-spacing:-0.780px;">OnePlus</span>
<span class="t" style="left:1073.88px;top:1178.64px;font-size:40px;line-height:40px;color:#fff;font-weight:700;letter-spacing:-0.573px;">“Hello</span>
<span class="t" style="left:1195.90px;top:1178.64px;font-size:40px;line-height:40px;color:#fff;font-weight:700;letter-spacing:0.893px;">May”</span>
<span class="t" style="left:735.67px;top:1226.54px;font-size:40px;line-height:40px;color:#fff;font-weight:700;letter-spacing:0.170px;">sale</span>
<span class="t" style="left:-12.30px;top:715.20px;font-size:29.3px;line-height:29.3px;color:#069de3;font-weight:700;letter-spacing:5.000px;-webkit-text-stroke:0.75px #069de3;transform:scaleX(0.62);transform-origin:0 0;">COMPUTING</span>
<span class="t" style="left:140.50px;top:717.49px;font-size:26px;line-height:26px;color:#fff;letter-spacing:0.804px;">Jon Martindale</span>
<span class="t" style="left:334.50px;top:717.49px;font-size:26px;line-height:26px;color:#a0a6b0;letter-spacing:0.477px;">12 minutes ago</span>
<span class="t" style="left:-14.14px;top:1177.20px;font-size:29.3px;line-height:29.3px;color:#069de3;font-weight:700;letter-spacing:5.000px;-webkit-text-stroke:0.75px #069de3;transform:scaleX(0.62);transform-origin:0 0;">MOBILE</span>
<span class="t" style="left:90.00px;top:1179.49px;font-size:26px;line-height:26px;color:#fff;letter-spacing:0.470px;">Nadeem Sarwar</span>
<span class="t" style="left:296.50px;top:1179.49px;font-size:26px;line-height:26px;color:#a0a6b0;letter-spacing:0.667px;">2 hours ago</span>
<span class="t" style="left:736.80px;top:587.50px;font-size:29.3px;line-height:29.3px;color:#069de3;font-weight:700;letter-spacing:5.267px;-webkit-text-stroke:0.75px #069de3;transform:scaleX(0.62);transform-origin:0 0;">GAMING</span>
<span class="t" style="left:846.10px;top:589.79px;font-size:26px;line-height:26px;color:#fff;letter-spacing:0.359px;">Jesse Lennox</span>
<span class="t" style="left:1023.50px;top:589.79px;font-size:26px;line-height:26px;color:#a0a6b0;letter-spacing:0.867px;">4 hours ago</span>
<span class="t" style="left:736.50px;top:1297.40px;font-size:29.3px;line-height:29.3px;color:#069de3;font-weight:700;letter-spacing:4.696px;-webkit-text-stroke:0.75px #069de3;transform:scaleX(0.62);transform-origin:0 0;">MOBILE</span>
<span class="t" style="left:846.00px;top:1299.69px;font-size:26px;line-height:26px;color:#fff;letter-spacing:0.250px;">John Alexander</span>
<span class="t" style="left:1042.20px;top:1299.69px;font-size:26px;line-height:26px;color:#a0a6b0;letter-spacing:0.617px;">5 hours ago</span>
</div>
</div>
</body></html>
